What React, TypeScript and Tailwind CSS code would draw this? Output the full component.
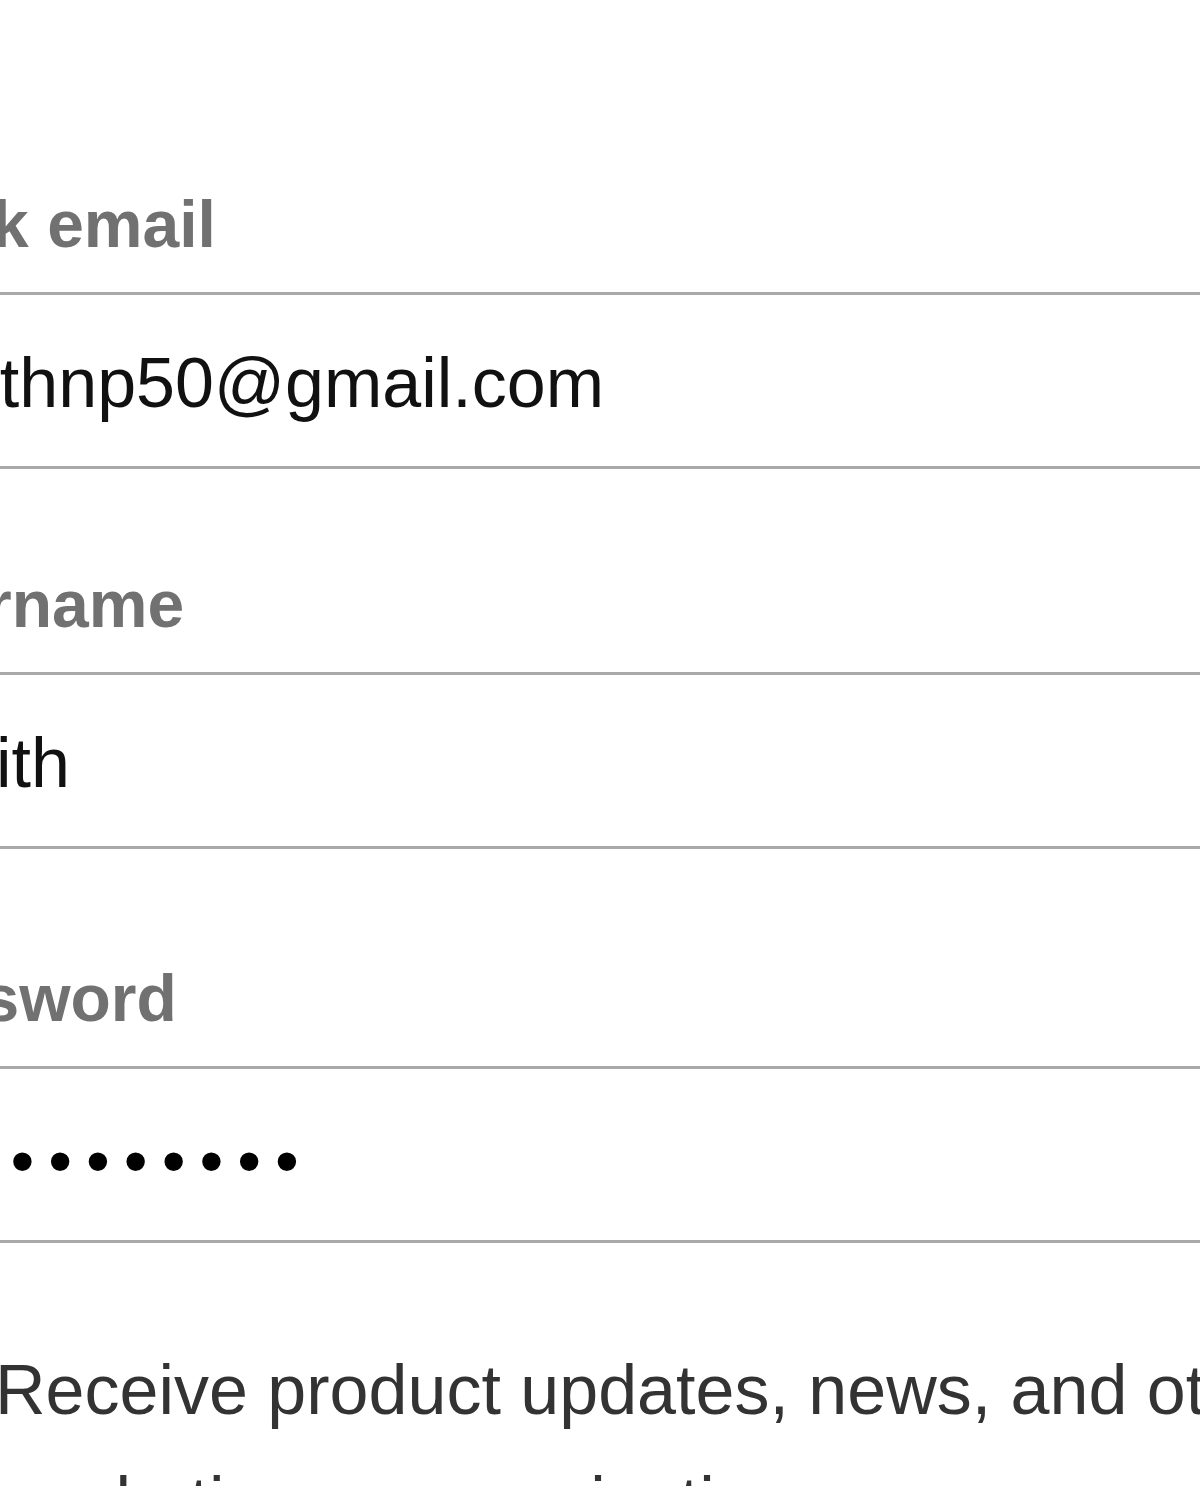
import React from "react";

function Field({ label, value, top, password }: { label: string; value: string; top: string; password?: boolean }) {
  return (
    <div className={top}>
      <div className="text-[66px] leading-none font-bold text-[#717171]">{label}</div>
      <div className={password ? "mt-[35px] h-[177px] border-y-[3px] border-[#a9a9a9] pl-[26px] pt-[57px]" : "mt-[35px] h-[177px] border-y-[3px] border-[#a9a9a9] pl-[26px] pt-[53px]"}>
        {password ? (
          <span className="ml-[6px] text-[68px] leading-none text-black tracking-[14px]">{value}</span>
        ) : (
          <span className="text-[70px] leading-none text-[#111]">{value}</span>
        )}
      </div>
    </div>
  );
}

export default function App() {
  return (
    <div className="h-[1486px] w-[1200px] overflow-hidden bg-white font-['Liberation_Sans',Arial,sans-serif]">
      <div className="ml-[-135px] w-[1600px] pt-[191px]">
        <Field label="Work email" value="smithnp50@gmail.com" top="" />
        <Field label="Username" value="Smith" top="mt-[102px]" />
        <Field label="Password" value="•••••••••••" top="mt-[116px]" password />
        <div className="mt-[91px] flex gap-[50px]">
          <div className="mt-[20px] h-[80px] w-[80px] shrink-0 rounded-[12px] border-[3px] border-[#a9a9a9]" />
          <p className="text-[70px] leading-[112px] text-[#333]">
            Receive product updates, news, and other marketing communications
          </p>
        </div>
      </div>
    </div>
  );
}
